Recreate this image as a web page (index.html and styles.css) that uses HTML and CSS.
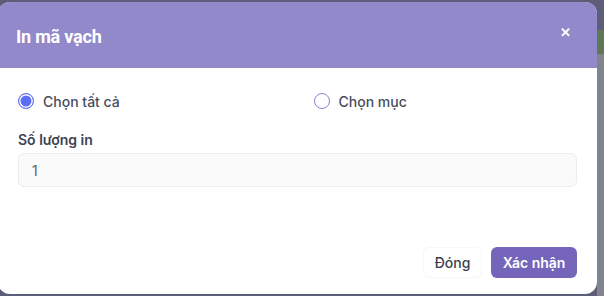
FILE: index.html
```html
<!DOCTYPE html>
<html lang="vi">
<head>
<meta charset="utf-8">
<link rel="stylesheet" href="styles.css">
</head>
<body>
<div class="backdrop">
  <div class="side-strip">
    <div class="strip-top"></div>
    <div class="strip-green"></div>
    <div class="strip-grey"></div>
  </div>
  <div class="modal">
    <div class="modal-header">
      <h1 class="modal-title">In mã vạch</h1>
      <span class="modal-close">&#x2715;</span>
    </div>
    <div class="modal-body">
      <div class="radio-row">
        <label class="radio-item"><span class="radio radio-checked"></span><span class="radio-label">Chọn tất cả</span></label>
        <label class="radio-item"><span class="radio"></span><span class="radio-label">Chọn mục</span></label>
      </div>
      <div class="field">
        <div class="field-label">Số lượng in</div>
        <div class="field-input">1</div>
      </div>
    </div>
    <div class="modal-footer">
      <button class="btn btn-light">Đóng</button>
      <button class="btn btn-primary">Xác nhận</button>
    </div>
  </div>
</div>
</body>
</html>
```

FILE: styles.css
```css
html, body {
  margin: 0;
  padding: 0;
  width: 604px;
  height: 296px;
  overflow: hidden;
  background: #5c5e79;
}
.backdrop {
  display: flex;
  flex-direction: row-reverse;
  height: 296px;
  padding-top: 2px;
  box-sizing: border-box;
}
.side-strip {
  width: 7px;
  margin-top: -2px;
  display: flex;
  flex-direction: column;
  background: #7d8190;
}
.strip-top { height: 30px; background: #5c5e79; }
.strip-green { height: 24px; background: #5f7755; }
.strip-grey { flex: 1; background: #80848f; }
.modal {
  width: 599px;
  height: 292px;
  margin-left: -2px;
  background: #ffffff;
  border-radius: 12px;
  overflow: hidden;
  display: flex;
  flex-direction: column;
  font-family: Inter, "Noto Sans", sans-serif;
}
.modal-header {
  height: 66px;
  flex: none;
  background: #9189ca;
  display: flex;
  align-items: center;
  justify-content: space-between;
  padding: 0 26px 0 18px;
}
.modal-title {
  margin: 0;
  font-family: Roboto, "Noto Sans", sans-serif;
  font-size: 18px;
  font-weight: 700;
  color: #ffffff;
  letter-spacing: -0.2px;
  padding-top: 2px;
}
.modal-close {
  color: #ffffff;
  font-size: 13px;
  font-weight: 700;
  line-height: 1;
  margin-bottom: 5px;
}
.modal-body {
  padding: 23px 20px 0 20px;
  flex: 1;
}
.radio-row {
  display: grid;
  grid-template-columns: 1fr 1fr;
  column-gap: 32px;
  height: 20px;
}
.radio-item {
  display: flex;
  align-items: center;
  gap: 9px;
}
.radio {
  width: 16px;
  height: 16px;
  box-sizing: border-box;
  border-radius: 50%;
  border: 1px solid #8b80cf;
  background: #fff;
  flex: none;
}
.radio-checked {
  border: 1px solid #5b6cf5;
  background: #5b6cf5;
  box-shadow: inset 0 0 0 1.5px #ffffff;
}
.radio-label {
  font-size: 14px;
  font-weight: 500;
  color: #474d5e;
}
.field {
  margin-top: 20px;
  display: flex;
  flex-direction: column;
  gap: 5px;
}
.field-label {
  font-size: 14px;
  font-weight: 600;
  color: #3d4352;
  line-height: 17px;
}
.field-input {
  height: 34px;
  box-sizing: border-box;
  border: 1px solid #ececef;
  background: #fafafa;
  border-radius: 6px;
  padding: 0 13px;
  display: flex;
  align-items: center;
  font-size: 14px;
  color: #5a5e66;
}
.modal-footer {
  display: flex;
  justify-content: flex-end;
  gap: 9px;
  padding: 0 20px 16px 20px;
}
.btn {
  height: 31px;
  border-radius: 6px;
  font-family: Inter, "Noto Sans", sans-serif;
  font-size: 14px;
  padding: 0;
  cursor: pointer;
}
.btn-light {
  width: 59px;
  background: #ffffff;
  border: 1px solid #f7f7f9;
  color: #3a3f4b;
  font-weight: 500;
}
.btn-primary {
  width: 86px;
  background: #7465ba;
  border: none;
  color: #ffffff;
  font-weight: 600;
}
```
